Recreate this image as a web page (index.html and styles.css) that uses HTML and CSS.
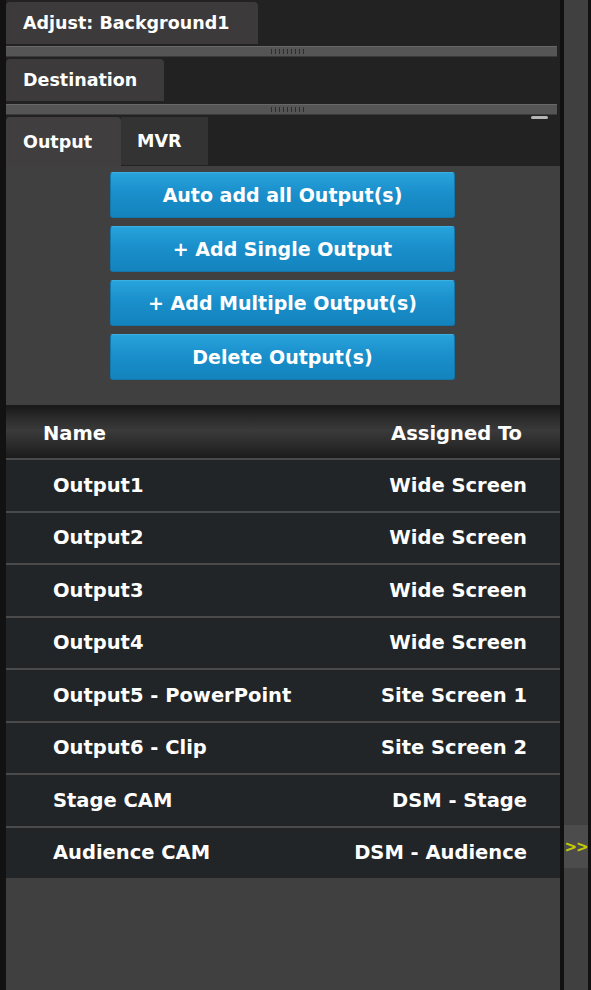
FILE: index.html
```html
<!DOCTYPE html>
<html lang="en">
<head>
  <meta charset="UTF-8">
  <meta name="viewport" content="width=device-width, initial-scale=1.0">
  <title>Output Assignment</title>
  <link rel="stylesheet" href="styles.css">
</head>
<body>
  <div class="shell">
    <div class="main">

      <!-- Adjust section -->
      <div class="tabstrip">
        <div class="tab tab-active tab-adjust">Adjust: Background1</div>
      </div>
      <div class="splitter"><span class="grip"></span></div>

      <!-- Destination section -->
      <div class="tabstrip tabstrip-mid">
        <div class="tab tab-active tab-dest">Destination</div>
      </div>
      <div class="splitter splitter-marked"><span class="grip"></span></div>

      <!-- Output / MVR tabs -->
      <div class="tabstrip tabstrip-tall">
        <div class="tab tab-active tab-output">Output</div>
        <div class="tab tab-idle">MVR</div>
      </div>

      <div class="panel">
        <div class="actions">
          <button class="btn">Auto add all Output(s)</button>
          <button class="btn">+ Add Single Output</button>
          <button class="btn">+ Add Multiple Output(s)</button>
          <button class="btn">Delete Output(s)</button>
        </div>

        <div class="grid">
          <div class="grid-head">
            <span>Name</span>
            <span>Assigned To</span>
          </div>
          <div class="grid-body" id="outputRows">
            <!-- rows are filled in by the script below -->
          </div>
        </div>
      </div>
    </div>

    <div class="side">
      <div class="expander">&gt;&gt;</div>
    </div>
  </div>

  <script>
    // Outputs and the screen each one feeds
    const outputs = [
      { name: 'Output1', dest: 'Wide Screen' },
      { name: 'Output2', dest: 'Wide Screen' },
      { name: 'Output3', dest: 'Wide Screen' },
      { name: 'Output4', dest: 'Wide Screen' },
      { name: 'Output5 - PowerPoint', dest: 'Site Screen 1' },
      { name: 'Output6 - Clip', dest: 'Site Screen 2' },
      { name: 'Stage CAM', dest: 'DSM - Stage' },
      { name: 'Audience CAM', dest: 'DSM - Audience' }
    ];

    const body = document.getElementById('outputRows');
    outputs.forEach(item => {
      const row = document.createElement('div');
      row.className = 'grid-row';
      row.innerHTML = `<span>${item.name}</span><span>${item.dest}</span>`;
      body.appendChild(row);
    });
  </script>
</body>
</html>
```

FILE: styles.css
```css
html, body {
  margin: 0;
  padding: 0;
}
body {
  background: #111;
  color: #fff;
  font-family: "DejaVu Sans", Verdana, sans-serif;
  font-weight: bold;
}
.shell {
  display: flex;
  height: 990px;
  border-left: 6px solid #121212;
  border-right: 3px solid #121212;
}
.main {
  width: 554px;
  display: flex;
  flex-direction: column;
  background: #404040;
}

/* Tab strips */
.tabstrip {
  display: flex;
  align-items: flex-start;
  flex-shrink: 0;
  height: 46px;
  padding-top: 2px;
  box-sizing: border-box;
  background: #222;
}
.tabstrip-mid {
  height: 47px;
}
.tabstrip-tall {
  height: 51px;
  align-items: stretch;
}
.tab {
  display: flex;
  align-items: center;
  height: 42px;
  padding: 0 17px;
  font-size: 17.5px;
  border-radius: 4px 4px 0 0;
  box-sizing: border-box;
}
.tab-active {
  background: #3c3a3a;
}
.tab-adjust {
  width: 252px;
}
.tab-dest {
  width: 158px;
}
.tabstrip-tall .tab {
  height: auto;
}
.tab-output {
  width: 115px;
  background: #403e3e;
}
.tab-idle {
  width: 87px;
  padding-left: 16px;
  margin-bottom: 1px;
  background: #333;
  border-radius: 0;
}

/* Splitter bars between sections */
.splitter {
  position: relative;
  flex-shrink: 0;
  height: 11px;
  margin-right: 3px;
  background: #555;
  border-top: 1px solid #686868;
  border-bottom: 1px solid #3a3a3a;
  box-sizing: border-box;
  display: flex;
  justify-content: center;
  align-items: center;
  box-shadow: 3px 0 0 #222;
}
.grip {
  width: 36px;
  height: 5px;
  margin-left: 14px;
  background: repeating-linear-gradient(90deg, #2e2e2e 0 1px, transparent 1px 4px);
}
.splitter-marked::after {
  content: "";
  position: absolute;
  right: 9px;
  top: 11px;
  width: 17px;
  height: 3px;
  border-radius: 2px;
  background: #b5b5b5;
}

/* Output panel */
.panel {
  flex: 1;
  background: #404040;
}
.actions {
  display: flex;
  flex-direction: column;
  align-items: center;
  gap: 8px;
  padding: 6px 0 25px;
}
.btn {
  width: 345px;
  height: 46px;
  margin-left: -1px;
  font-family: inherit;
  font-weight: bold;
  font-size: 19px;
  color: #fff;
  background: linear-gradient(#28a3dc, #1a8fcb 45%, #1383bd);
  border: 1px solid #1477ab;
  border-top-color: #3bb0e4;
  border-radius: 3px;
  cursor: pointer;
}

/* Output grid */
.grid {
  border-top: 3px solid #1a1a1a;
}
.grid-head {
  display: flex;
  justify-content: space-between;
  align-items: center;
  height: 50px;
  padding: 0 38px 0 37px;
  font-size: 19.5px;
  background: linear-gradient(#1c1c1c, #2e2e2e 25%, #3a3a3a 45%, #2a2a2a 75%, #1b1b1b);
}
.grid-row {
  display: flex;
  justify-content: space-between;
  align-items: center;
  height: 50.5px;
  padding: 0 33px 0 47px;
  font-size: 19.5px;
  background: #222527;
  border-top: 2px solid #4a4a4a;
}

/* Collapsed side column */
.side {
  width: 24px;
  margin-left: 4px;
  background: #404040;
  display: flex;
  flex-direction: column;
}
.expander {
  margin-top: 825px;
  height: 43px;
  display: flex;
  align-items: center;
  justify-content: center;
  background: #4c4c4c;
  color: #c5cc00;
  font-size: 15px;
  letter-spacing: -1px;
}
```
